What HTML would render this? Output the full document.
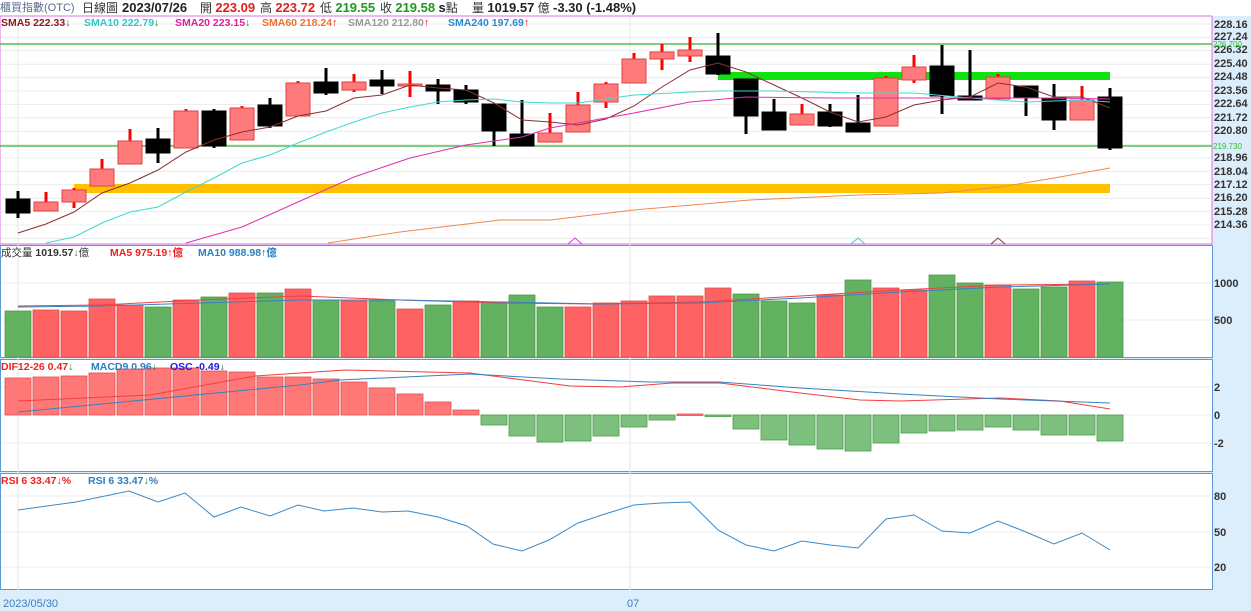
<!DOCTYPE html>
<html><head><meta charset="utf-8"><style>
html,body{margin:0;padding:0;width:1251px;height:611px;overflow:hidden;background:#dcedfb;font-family:"Liberation Sans","Noto Sans CJK TC",sans-serif}
svg{position:absolute;left:0;top:0}
text{font-family:"Liberation Sans","Noto Sans CJK TC",sans-serif}
.ax{font-size:11px;font-weight:bold;fill:#333}
.lg{font-size:10.5px;font-weight:bold}
</style></head><body>
<svg id="s" width="1251" height="611" xmlns="http://www.w3.org/2000/svg">
<rect x="0" y="0" width="1251" height="16" fill="#fff"/>
<rect x="0" y="16" width="1212" height="228" fill="#fff" stroke="#e070e0" stroke-width="1"/>
<rect x="0.5" y="245.5" width="1212" height="112" fill="#fff" stroke="#5b9bd5"/>
<rect x="0.5" y="359.5" width="1212" height="112" fill="#fff" stroke="#5b9bd5"/>
<rect x="0.5" y="473.5" width="1212" height="116" fill="#fff" stroke="#5b9bd5"/>
<g id="grid" stroke="#ececec" stroke-width="1"></g>
<line x1="18" y1="17" x2="18" y2="590" stroke="#e6e6e6"/>
<line x1="630" y1="17" x2="630" y2="590" stroke="#e6e6e6"/>
<rect x="74" y="184" width="1036" height="9" fill="#ffc000"/>
<rect x="718" y="72" width="392" height="8" fill="#11e011"/>
<line x1="0" y1="44" x2="1212" y2="44" stroke="#2eb82e" stroke-width="1.2"/>
<line x1="0" y1="146" x2="1212" y2="146" stroke="#2eb82e" stroke-width="1.2"/>
<g id="g"></g>
<text x="0" y="11" font-size="11" fill="#5a6b8a">櫃買指數(OTC)</text>
<text x="82" y="12" font-size="12" fill="#333">日線圖</text>
<text x="122" y="12" font-size="13" font-weight="bold" fill="#222">2023/07/26</text>
<text x="200" y="12" font-size="12" fill="#333">開 <tspan font-weight="bold" font-size="13" fill="#e02020">223.09</tspan></text>
<text x="260" y="12" font-size="12" fill="#333">高 <tspan font-weight="bold" font-size="13" fill="#e02020">223.72</tspan></text>
<text x="320" y="12" font-size="12" fill="#333">低 <tspan font-weight="bold" font-size="13" fill="#1f9a1f">219.55</tspan></text>
<text x="380" y="12" font-size="12" fill="#333">收 <tspan font-weight="bold" font-size="13" fill="#1f9a1f">219.58</tspan> <tspan font-weight="bold" font-size="13" fill="#222">s</tspan>點</text>
<text x="472" y="12" font-size="12" fill="#333">量 <tspan font-weight="bold" font-size="13" fill="#222">1019.57</tspan> 億 <tspan font-weight="bold" font-size="13" fill="#222"> -3.30 (-1.48%)</tspan></text>
<text x="1" y="26" class="lg" fill="#8b1a1a">SMA5 222.33<tspan fill="#1a8a1a">↓</tspan></text>
<text x="84" y="26" class="lg" fill="#30c8c8">SMA10 222.79<tspan fill="#1a8a1a">↓</tspan></text>
<text x="175" y="26" class="lg" fill="#e0209a">SMA20 223.15<tspan fill="#1a8a1a">↓</tspan></text>
<text x="262" y="26" class="lg" fill="#f07030">SMA60 218.24<tspan fill="#e00000">↑</tspan></text>
<text x="348" y="26" class="lg" fill="#999">SMA120 212.80<tspan fill="#e00000">↑</tspan></text>
<text x="448" y="26" class="lg" fill="#2a8ad0">SMA240 197.69<tspan fill="#e00000">↑</tspan></text>
<text x="1" y="256" font-size="10.5" fill="#333">成交量 <tspan font-weight="bold">1019.57</tspan><tspan fill="#1a8a1a">↓</tspan>億</text>
<text x="110" y="256" class="lg" fill="#f02020">MA5 975.19<tspan fill="#e00000">↑</tspan>億</text>
<text x="198" y="256" class="lg" fill="#2a7fc0">MA10 988.98<tspan fill="#e00000">↑</tspan>億</text>
<text x="1" y="370" class="lg" fill="#f02020">DIF12-26 0.47<tspan fill="#1a8a1a">↓</tspan></text>
<text x="91" y="370" class="lg" fill="#2a7fc0">MACD9 0.96<tspan fill="#1a8a1a">↓</tspan></text>
<text x="170" y="370" class="lg" fill="#2020e0">OSC -0.49<tspan fill="#1a8a1a">↓</tspan></text>
<text x="1" y="484" class="lg" fill="#f02020">RSI 6 33.47<tspan fill="#1a8a1a">↓</tspan>%</text>
<text x="88" y="484" class="lg" fill="#2a7fc0">RSI 6 33.47<tspan fill="#1a8a1a">↓</tspan>%</text>
<g class="ax">
<text x="1214" y="28">228.16</text><text x="1214" y="40">227.24</text><text x="1214" y="53">226.32</text>
<text x="1214" y="67">225.40</text><text x="1214" y="80">224.48</text><text x="1214" y="94">223.56</text>
<text x="1214" y="107">222.64</text><text x="1214" y="121">221.72</text><text x="1214" y="134">220.80</text>
<text x="1214" y="161">218.96</text><text x="1214" y="175">218.04</text><text x="1214" y="188">217.12</text>
<text x="1214" y="201">216.20</text><text x="1214" y="215">215.28</text><text x="1214" y="228">214.36</text>
<text x="1214" y="287">1000</text><text x="1214" y="324">500</text>
<text x="1214" y="391">2</text><text x="1214" y="419">0</text><text x="1214" y="447">-2</text>
<text x="1214" y="500">80</text><text x="1214" y="536">50</text><text x="1214" y="571">20</text>
</g>
<text x="1213" y="47" font-size="8" fill="#2ec02e">226.700</text>
<text x="1213" y="149" font-size="8" fill="#2ec02e">219.730</text>
<text x="3" y="607" font-size="11" fill="#3a7fc0">2023/05/30</text>
<text x="627" y="607" font-size="11" fill="#3a7fc0">07</text>
</svg>
<script>
var N='http://www.w3.org/2000/svg',g=document.getElementById('g'),gr=document.getElementById('grid');
function el(t,a,p){var e=document.createElementNS(N,t);for(var k in a)e.setAttribute(k,a[k]);(p||g).appendChild(e);return e;}
for(var y=24;y<244;y+=13.4)el('line',{x1:1,x2:1211,y1:y,y2:y},gr);
[283,320].forEach(function(y){el('line',{x1:1,x2:1211,y1:y,y2:y},gr)});
[387,415,443].forEach(function(y){el('line',{x1:1,x2:1211,y1:y,y2:y},gr)});
[496,532,567].forEach(function(y){el('line',{x1:1,x2:1211,y1:y,y2:y},gr)});
var C=[['b',199,213,191,218],['r',202,211,192,211],['r',190,202,188,208],['r',169,186,159,186],['r',141,164,129,164],['b',139,153,128,163],['r',111,148,109,148],['b',111,146,109,148],['r',108,140,106,140],['b',105,126,98,128],
['r',83,116,81,116],['b',82,93,68,95],['r',82,90,74,92],['b',80,86,70,94],['r',84,86,71,97],['b',85,91,79,104],['b',90,102,85,104],['b',104,131,104,146],['b',134,146,100,146],['r',133,142,113,142],
['r',105,132,92,132],['r',84,102,82,108],['r',59,83,53,83],['r',52,59,44,70],['r',50,56,37,62],['b',56,74,33,75],['b',79,116,79,134],['b',112,130,99,130],['r',114,125,104,125],['b',112,126,104,127],
['b',123,132,95,132],['r',78,126,76,126],['r',67,80,55,83],['b',66,96,45,114],['b',96,100,50,100],['r',77,99,74,99],['b',86,97,86,116],['b',98,120,84,130],['r',100,120,86,120],['b',97,148,88,150]];
C.forEach(function(c,i){var x=18+28*i,r=c[0]=='r';
el('rect',{x:x-1.5,y:c[3],width:3,height:c[4]-c[3],fill:r?'#f00':'#000'});
el('rect',{x:x-12,y:c[1],width:24,height:Math.max(2,c[2]-c[1]),fill:r?'#ff7b7b':'#000',stroke:r?'#e04040':'#000','stroke-width':1});});
function pl(pts,col,w){el('polyline',{points:pts,fill:'none',stroke:col,'stroke-width':w||1});}
var s5=[233,224,212,193,183,170,152,140,132,127,116,111,98,95,85,88,90,103,120,122,125,119,106,87,70,63,72,85,98,112,122,117,105,100,97,83,87,97,97,108];
pl(s5.map(function(v,i){return (18+28*i)+','+v}).join(' '),'#8b3030');
pl('46,243 74,237 102,223 130,212 158,207 186,192 214,178 242,163 270,155 298,143 326,132 354,122 382,113 410,107 438,102 466,100 494,99 522,102 550,103 578,103 634,95 690,92 718,91 774,91 858,93 914,93 970,98 1026,102 1082,100 1110,102','#40d8d0');
pl('186,243 242,227 298,202 354,177 410,158 466,145 522,137 550,128 578,123 634,113 690,102 746,97 830,98 914,98 970,98 1054,98 1110,99','#e030b0');
pl('328,243 400,232 500,220 550,220 634,210 750,200 858,195 942,193 1000,187 1054,178 1110,168','#f08850');
pl('568,244 575,238 582,244','#e030e0');pl('851,244 858,238 865,244','#40c8d0');pl('991,244 998,238 1005,244','#8b3030');
var V=[311,310,311,299,305,307,300,297,293,293,289,300,301,301,309,305,301,302,295,307,307,303,301,296,296,288,294,301,303,295,280,288,290,275,283,285,289,287,281,282];
var VR='0111101010101010100011111100010110010010';
V.forEach(function(v,i){var x=18+28*i,r=VR[i]=='1';el('rect',{x:x-13,y:v,width:26,height:357-v,fill:r?'#ff6262':'#62b262',stroke:r?'#e05050':'#4a9a4a','stroke-width':0.8});});
pl('18,306 100,305 200,300 300,296 400,300 500,303 600,304 700,302 800,296 900,290 1000,285 1110,284','#f04040');
pl('18,307 100,306 200,303 300,300 400,300 500,302 600,304 700,303 800,298 900,292 1000,287 1110,284','#3a80c0');
var M=[378,377,376,373,369,368,368,371,372,377,377,379,382,388,394,402,410,425,436,442,441,436,427,420,414,416,429,440,445,449,451,443,433,431,430,427,430,435,435,441];
M.forEach(function(v,i){var x=18+28*i,up=v<415;var y0=up?v:415,h=Math.max(1.5,Math.abs(v-415));el('rect',{x:x-13,y:y0,width:26,height:h,fill:up?'#ff7878':'#7dc07d',stroke:up?'#e05050':'#4a9a4a','stroke-width':0.8});});
pl('18,401 150,395 255,376 345,370 470,373 570,386 620,387 672,383 720,383 800,393 860,400 900,401 1000,398 1060,401 1110,409','#f04040');
pl('18,412 300,385 340,380 470,374 560,379 650,382 720,382 800,388 900,394 1000,399 1110,403','#3a80c0');
pl('18,510 76,502 129,491 158,502 185,493 214,517 241,507 270,516 298,505 324,511 353,508 382,512 408,511 438,517 467,526 493,544 522,551 549,540 578,523 605,514 634,505 661,503 690,502 718,530 746,545 774,551 802,541 830,545 858,548 886,519 914,515 942,531 970,533 998,521 1026,532 1054,544 1082,533 1110,550','#3a8ac8');
</script>
</body></html>
